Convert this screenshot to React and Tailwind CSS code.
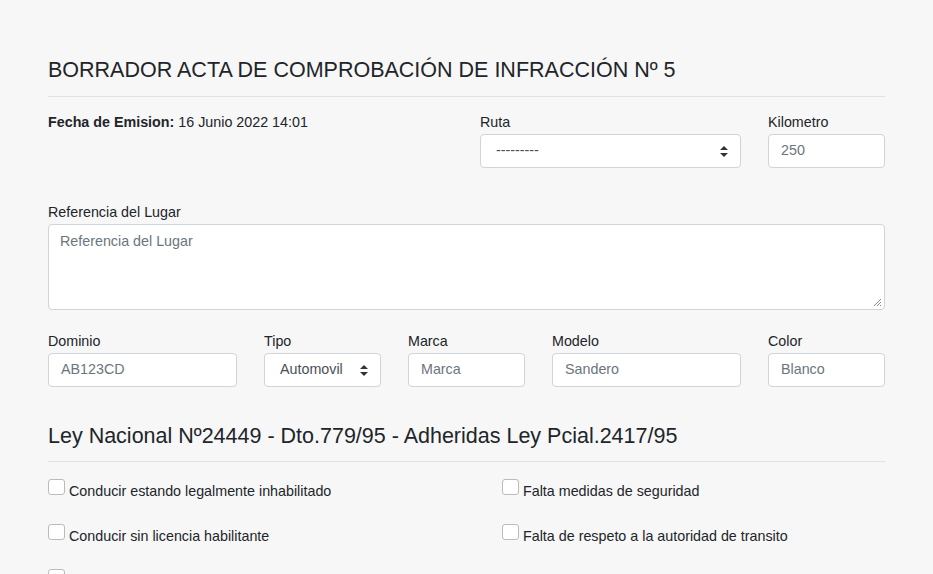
export default function App() {
  const inp = "h-[34px] w-full rounded-[4px] border border-[#ced4da] bg-white px-3 text-[14.3px] text-[#6c757d] flex items-center";
  const lbl = "block text-[14.3px] text-[#212529] mb-[3px] leading-[17px]";
  const Sel = ({ v, cls }) => (
    <div className={inp + " justify-between pl-[15px] pr-[12px] text-[#495057] " + (cls || "")}>
      <span>{v}</span>
      <svg width="8" height="11" viewBox="0 0 8 11"><path d="M4 0L8 4H0Z M4 11L0 7H8Z" fill="#333" /></svg>
    </div>
  );
  const Chk = ({ t }) => (
    <div className="flex items-start h-[45px]">
      <span className="mt-[2px] w-[17px] h-[16px] rounded-[3px] border border-[#bbb] bg-white shrink-0 mr-[4px]" />
      <span className="text-[14.3px] text-[#212529] mt-[4px]">{t}</span>
    </div>
  );
  return (
    <div className="min-h-[574px] bg-[#f7f7f7] px-[48px] pt-[57px]" style={{ fontFamily: '"Liberation Sans", Arial, sans-serif' }}>
      <h1 className="text-[21.5px] text-[#212529] leading-[26px] pb-[13px] border-b border-[#e2e2e2]">BORRADOR ACTA DE COMPROBACIÓN DE INFRACCIÓN Nº 5</h1>
      <div className="grid grid-cols-12 gap-x-[27px] mt-[17px]">
        <div className="col-span-6 text-[14.3px] text-[#212529] leading-[17px]"><b>Fecha de Emision:</b> 16 Junio 2022 14:01</div>
        <div className="col-span-4"><label className={lbl}>Ruta</label><Sel v="---------" /></div>
        <div className="col-span-2"><label className={lbl}>Kilometro</label><div className={inp}>250</div></div>
      </div>
      <div className="mt-[36px]">
        <label className={lbl}>Referencia del Lugar</label>
        <div className="h-[86px] w-full rounded-[4px] border border-[#ced4da] bg-white px-[11px] pt-[6px] text-[14.3px] text-[#6c757d] relative">
          Referencia del Lugar
          <svg className="absolute right-[2px] bottom-[2px]" width="9" height="9" viewBox="0 0 9 9"><path d="M8 1L1 8M8 4L4 8M8 7L7 8" stroke="#888" strokeWidth="1" /></svg>
        </div>
      </div>
      <div className="grid grid-cols-12 gap-x-[27px] mt-[23px]">
        <div className="col-span-3"><label className={lbl}>Dominio</label><div className={inp}>AB123CD</div></div>
        <div className="col-span-2"><label className={lbl}>Tipo</label><Sel v="Automovil" /></div>
        <div className="col-span-2"><label className={lbl}>Marca</label><div className={inp}>Marca</div></div>
        <div className="col-span-3"><label className={lbl}>Modelo</label><div className={inp}>Sandero</div></div>
        <div className="col-span-2"><label className={lbl}>Color</label><div className={inp}>Blanco</div></div>
      </div>
      <h2 className="mt-[36px] text-[21.5px] text-[#212529] leading-[26px] pb-[12px] border-b border-[#e2e2e2]">Ley Nacional Nº24449 - Dto.779/95 - Adheridas Ley Pcial.2417/95</h2>
      <div className="flex mt-[15px]">
        <div className="w-[454px]"><Chk t="Conducir estando legalmente inhabilitado" /><Chk t="Conducir sin licencia habilitante" /><Chk t="" /></div>
        <div><Chk t="Falta medidas de seguridad" /><Chk t="Falta de respeto a la autoridad de transito" /></div>
      </div>
    </div>
  );
}
